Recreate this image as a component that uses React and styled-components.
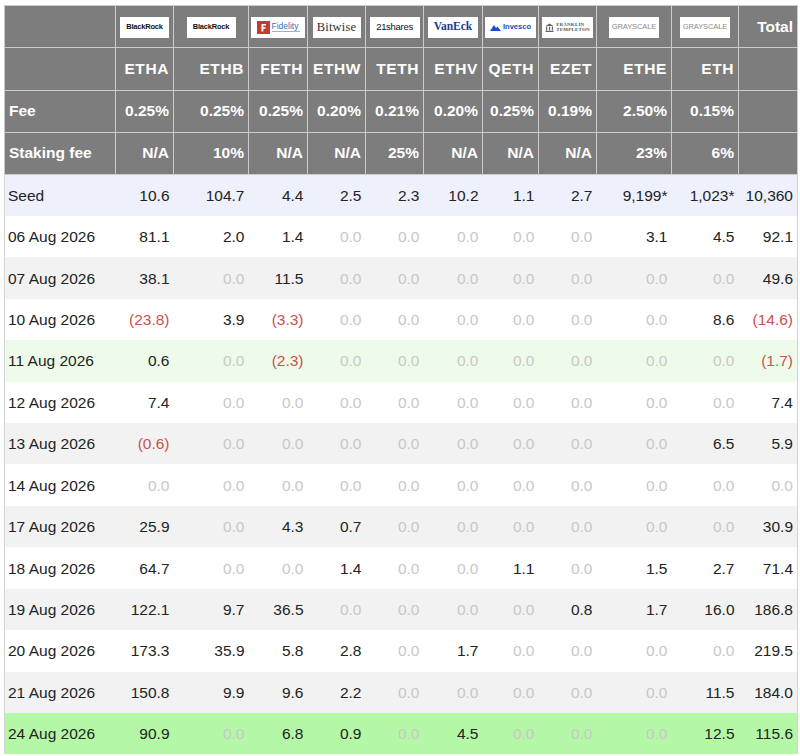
import React from 'react';
import styled, { createGlobalStyle } from 'styled-components';

const GlobalStyle = createGlobalStyle`
  html, body {
    margin: 0;
    padding: 0;
    background: #ffffff;
  }
  body {
    font-family: "Liberation Sans", Arial, sans-serif;
  }
`;

const funds = [
  { ticker: 'ETHA', fee: '0.25%', staking: 'N/A', logo: 'blackrock' },
  { ticker: 'ETHB', fee: '0.25%', staking: '10%', logo: 'blackrock' },
  { ticker: 'FETH', fee: '0.25%', staking: 'N/A', logo: 'fidelity' },
  { ticker: 'ETHW', fee: '0.20%', staking: 'N/A', logo: 'bitwise' },
  { ticker: 'TETH', fee: '0.21%', staking: '25%', logo: '21shares' },
  { ticker: 'ETHV', fee: '0.20%', staking: 'N/A', logo: 'vaneck' },
  { ticker: 'QETH', fee: '0.25%', staking: 'N/A', logo: 'invesco' },
  { ticker: 'EZET', fee: '0.19%', staking: 'N/A', logo: 'franklin' },
  { ticker: 'ETHE', fee: '2.50%', staking: '23%', logo: 'grayscale' },
  { ticker: 'ETH', fee: '0.15%', staking: '6%', logo: 'grayscale' },
];

// first width is the date column, last is Total
const colWidths = [111, 58, 75, 59, 58, 58, 59, 56, 58, 75, 67, 59];

const rows = [
  { date: 'Seed', kind: 'seed', values: ['10.6', '104.7', '4.4', '2.5', '2.3', '10.2', '1.1', '2.7', '9,199*', '1,023*', '10,360'] },
  { date: '06 Aug 2026', values: ['81.1', '2.0', '1.4', '0.0', '0.0', '0.0', '0.0', '0.0', '3.1', '4.5', '92.1'] },
  { date: '07 Aug 2026', values: ['38.1', '0.0', '11.5', '0.0', '0.0', '0.0', '0.0', '0.0', '0.0', '0.0', '49.6'] },
  { date: '10 Aug 2026', values: ['(23.8)', '3.9', '(3.3)', '0.0', '0.0', '0.0', '0.0', '0.0', '0.0', '8.6', '(14.6)'] },
  { date: '11 Aug 2026', kind: 'soft', values: ['0.6', '0.0', '(2.3)', '0.0', '0.0', '0.0', '0.0', '0.0', '0.0', '0.0', '(1.7)'] },
  { date: '12 Aug 2026', values: ['7.4', '0.0', '0.0', '0.0', '0.0', '0.0', '0.0', '0.0', '0.0', '0.0', '7.4'] },
  { date: '13 Aug 2026', values: ['(0.6)', '0.0', '0.0', '0.0', '0.0', '0.0', '0.0', '0.0', '0.0', '6.5', '5.9'] },
  { date: '14 Aug 2026', values: ['0.0', '0.0', '0.0', '0.0', '0.0', '0.0', '0.0', '0.0', '0.0', '0.0', '0.0'] },
  { date: '17 Aug 2026', values: ['25.9', '0.0', '4.3', '0.7', '0.0', '0.0', '0.0', '0.0', '0.0', '0.0', '30.9'] },
  { date: '18 Aug 2026', values: ['64.7', '0.0', '0.0', '1.4', '0.0', '0.0', '1.1', '0.0', '1.5', '2.7', '71.4'] },
  { date: '19 Aug 2026', values: ['122.1', '9.7', '36.5', '0.0', '0.0', '0.0', '0.0', '0.8', '1.7', '16.0', '186.8'] },
  { date: '20 Aug 2026', values: ['173.3', '35.9', '5.8', '2.8', '0.0', '1.7', '0.0', '0.0', '0.0', '0.0', '219.5'] },
  { date: '21 Aug 2026', values: ['150.8', '9.9', '9.6', '2.2', '0.0', '0.0', '0.0', '0.0', '0.0', '11.5', '184.0'] },
  { date: '24 Aug 2026', kind: 'bright', values: ['90.9', '0.0', '6.8', '0.9', '0.0', '4.5', '0.0', '0.0', '0.0', '12.5', '115.6'] },
];

const toneOf = (v) => {
  if (v === '0.0') return 'zero';
  if (v.startsWith('(')) return 'neg';
  return 'pos';
};

const rowBg = (kind, index) => {
  if (kind === 'seed') return '#eef0fb';
  if (kind === 'soft') return '#eefbea';
  if (kind === 'bright') return '#b4f7a6';
  return index % 2 === 0 ? '#f2f2f2' : '#ffffff';
};

const Page = styled.div`
  padding: 5px 3px 0 4px;
`;

const Table = styled.table`
  width: 793px;
  table-layout: fixed;
  border-collapse: collapse;
  border-left: 1px solid #d4d4d4;
  border-right: 1px solid #d4d4d4;
`;

const HeadCell = styled.th`
  height: 42.25px;
  padding: 0 4px;
  background: #7d7d7d;
  border: 1px solid #cbcbcb;
  color: #ffffff;
  font-size: 15.5px;
  font-weight: bold;
  text-align: ${(p) => (p.$left ? 'left' : 'right')};
  white-space: nowrap;
  letter-spacing: ${(p) => (p.$spaced ? '0.6px' : '0')};
  box-sizing: border-box;
`;

const LogoCell = styled(HeadCell)`
  padding: 0;
  text-align: center;
`;

const Row = styled.tr`
  background: ${(p) => p.$bg};
`;

const Cell = styled.td`
  height: 41.43px;
  padding: 1px 4px 0 3px;
  box-sizing: border-box;
  font-size: 15.5px;
  text-align: ${(p) => (p.$left ? 'left' : 'right')};
  white-space: nowrap;
  color: ${(p) => (p.$tone === 'zero' ? '#c8c8c8' : p.$tone === 'neg' ? '#c65350' : '#232323')};
`;

const LogoBox = styled.div`
  display: inline-flex;
  align-items: center;
  justify-content: center;
  gap: 2px;
  width: ${(p) => p.$w || 50}px;
  height: 21px;
  margin-top: 1px;
  background: #ffffff;
  vertical-align: middle;
  overflow: hidden;
`;

const SmallMark = styled.span`
  font-family: ${(p) => p.$font || '"Liberation Sans", Arial, sans-serif'};
  font-size: ${(p) => p.$size}px;
  font-weight: ${(p) => p.$weight || 'normal'};
  color: ${(p) => p.$color || '#111'};
  letter-spacing: ${(p) => p.$ls || '0'};
  line-height: 1;
`;

const FidelityWord = styled.span`
  display: flex;
  flex-direction: column;
  align-items: flex-start;
  gap: 1px;
`;

const FidelitySub = styled.span`
  display: block;
  width: 28px;
  height: 1px;
  background: #9ab0cc;
`;

const FranklinText = styled.span`
  display: flex;
  flex-direction: column;
  font-family: "Liberation Serif", "Times New Roman", serif;
  font-size: 5px;
  line-height: 1.05;
  color: #555;
  letter-spacing: 0.2px;
  text-align: left;
`;

const Logo = ({ name }) => {
  switch (name) {
    case 'blackrock':
      return (
        <LogoBox $w={49}>
          <SmallMark $size={7.5} $weight="bold" $color="#111" $ls="-0.2px">BlackRock</SmallMark>
        </LogoBox>
      );
    case 'fidelity':
      return (
        <LogoBox $w={54}>
          <svg width="13" height="13" viewBox="0 0 13 13">
            <rect width="13" height="13" fill="#c33b32" />
            <path d="M4.5 3h4.5v1.6H6.3v1.6h2.3v1.5H6.3V10.5H4.5z" fill="#ffffff" />
          </svg>
          <FidelityWord>
            <SmallMark $size={8.5} $color="#3d6fb5">Fidelity</SmallMark>
            <FidelitySub />
          </FidelityWord>
        </LogoBox>
      );
    case 'bitwise':
      return (
        <LogoBox $w={48}>
          <SmallMark $size={12.5} $font={'"Liberation Serif", "Times New Roman", serif'} $color="#333" $ls="0.2px">
            Bitwise
          </SmallMark>
        </LogoBox>
      );
    case '21shares':
      return (
        <LogoBox $w={50}>
          <SmallMark $size={9.5} $color="#111" $ls="-0.3px">21shares</SmallMark>
        </LogoBox>
      );
    case 'vaneck':
      return (
        <LogoBox $w={50}>
          <SmallMark
            $size={11.5}
            $weight="bold"
            $font={'"Liberation Serif", "Times New Roman", serif'}
            $color="#1f3a8a"
          >
            VanEck
          </SmallMark>
        </LogoBox>
      );
    case 'invesco':
      return (
        <LogoBox $w={51}>
          <svg width="11" height="7" viewBox="0 0 11 7">
            <path d="M0 7 L4 1 L6 4 L7.5 2.5 L11 7 Z" fill="#1e4bd8" />
          </svg>
          <SmallMark $size={7.5} $weight="bold" $color="#2346d0">Invesco</SmallMark>
        </LogoBox>
      );
    case 'franklin':
      return (
        <LogoBox $w={51}>
          <svg width="9" height="9" viewBox="0 0 9 9">
            <path d="M0.5 3 L4.5 0.5 L8.5 3 Z" fill="#666" />
            <rect x="1" y="3.5" width="1.2" height="4" fill="#666" />
            <rect x="3.9" y="3.5" width="1.2" height="4" fill="#666" />
            <rect x="6.8" y="3.5" width="1.2" height="4" fill="#666" />
            <rect x="0.5" y="7.8" width="8" height="1.2" fill="#666" />
          </svg>
          <FranklinText>
            <span>FRANKLIN</span>
            <span>TEMPLETON</span>
          </FranklinText>
        </LogoBox>
      );
    case 'grayscale':
      return (
        <LogoBox $w={50}>
          <SmallMark $size={7.5} $color="#8a8a8a" $ls="-0.1px">GRAYSCALE</SmallMark>
        </LogoBox>
      );
    default:
      return null;
  }
};

const App = () => {
  return (
    <Page>
      <GlobalStyle />
      <Table>
        <colgroup>
          {colWidths.map((w, i) => (
            <col key={i} style={{ width: w }} />
          ))}
        </colgroup>
        <thead>
          <tr>
            <HeadCell />
            {funds.map((f, i) => (
              <LogoCell key={i}>
                <Logo name={f.logo} />
              </LogoCell>
            ))}
            <HeadCell>Total</HeadCell>
          </tr>
          <tr>
            <HeadCell />
            {funds.map((f) => (
              <HeadCell key={f.ticker} $spaced>
                {f.ticker}
              </HeadCell>
            ))}
            <HeadCell />
          </tr>
          <tr>
            <HeadCell $left>Fee</HeadCell>
            {funds.map((f) => (
              <HeadCell key={f.ticker}>{f.fee}</HeadCell>
            ))}
            <HeadCell />
          </tr>
          <tr>
            <HeadCell $left>Staking fee</HeadCell>
            {funds.map((f) => (
              <HeadCell key={f.ticker}>{f.staking}</HeadCell>
            ))}
            <HeadCell />
          </tr>
        </thead>
        <tbody>
          {rows.map((r, i) => (
            <Row key={r.date} $bg={rowBg(r.kind, i)}>
              <Cell $left>{r.date}</Cell>
              {r.values.map((v, j) => (
                <Cell key={j} $tone={toneOf(v)}>
                  {v}
                </Cell>
              ))}
            </Row>
          ))}
        </tbody>
      </Table>
    </Page>
  );
};

export default App;
